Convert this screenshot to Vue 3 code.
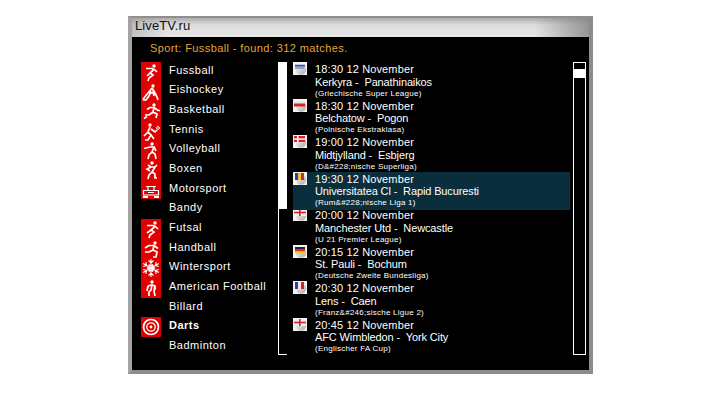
<script setup>
const figures = {
  soccer: { head: [13, 4], d: 'M5 6.5H11L13 7.5L9 11L12 13L8 16L7 19M13 7L16 10M9 11L6 14' },
  hockey: { head: [12, 5], d: 'M11 7L7 12L3 17L2 19M11 7L14 12L16 16L17 19M8 12H14M10 10L8 15L5 19H2M12 10L13 15' },
  run: { head: [13, 4], d: 'M6 8.5L9 6.5H13L12 11L16 13L15 17M13 6.5L17 9.5H19M12 11L8 14H4M3 17.5L6 15.5' },
  tennis: { head: [9, 4], d: 'M9 6L7 11L10 14L7 19H4M7 11L3 15M10 8L14 11L16 9M10 14L13 18', ball: [17, 7] },
  volley: { head: [11, 4], d: 'M3 8.5L9 7H13L11 12L14 14L15 19M11 12L8 15L7 19M13 7L15 11' },
  box: { head: [11, 3], d: 'M7 5L10 7H14L16 5M10 7L6 9L9 11M14 7L11 12L14 14L14 18H16M11 12L8 15L7 19' },
  motor: { car: true, d: '' },
  futsal: { head: [14, 4], d: 'M6 6.5H12L14 7.5L10 11L13 13L9 16L8 19M14 7L17 10M10 11L6 14' },
  hand: { head: [14, 4], d: 'M4 9L8 6.5H13L12 11L16 13L15 18H12M13 6.5L17 9.5M12 11L8 13H4' },
  winter: { snow: true, d: '' },
  american: { head: [11, 4], d: 'M7 8L11 7L14 8L13 13L14 18M11 7L10 12L8 14V18M7 8L6 13M14 8V12' },
  darts: { target: true, d: '' }
}

const sports = [
  [{ name: 'Fussball', icon: 'soccer' }, { name: 'Eishockey', icon: 'hockey' }, { name: 'Basketball', icon: 'run' }, { name: 'Tennis', icon: 'tennis' }, { name: 'Volleyball', icon: 'volley' }, { name: 'Boxen', icon: 'box' }, { name: 'Motorsport', icon: 'motor' }],
  [{ name: 'Bandy' }],
  [{ name: 'Futsal', icon: 'futsal' }, { name: 'Handball', icon: 'hand' }, { name: 'Wintersport', icon: 'winter' }, { name: 'American Football', icon: 'american' }],
  [{ name: 'Billard' }],
  [{ name: 'Darts', icon: 'darts', bold: true }],
  [{ name: 'Badminton' }]
].flatMap((g, gi) => g.map((s, i) => ({ ...s, key: gi + '-' + i })))

const snowAngles = [0, 60, 120]

const matches = [
  { time: '18:30 12 November', teams: 'Kerkyra -  Panathinaikos', league: '(Griechische Super League)', flag: 'gr' },
  { time: '18:30 12 November', teams: 'Belchatow -  Pogon', league: '(Polnische Ekstraklasa)', flag: 'pl' },
  { time: '19:00 12 November', teams: 'Midtjylland -  Esbjerg', league: '(D&#228;nische Superliga)', flag: 'dk' },
  { time: '19:30 12 November', teams: 'Universitatea Cl -  Rapid Bucuresti', league: '(Rum&#228;nische Liga 1)', flag: 'ro', selected: true },
  { time: '20:00 12 November', teams: 'Manchester Utd -  Newcastle', league: '(U 21 Premier League)', flag: 'en' },
  { time: '20:15 12 November', teams: 'St. Pauli -  Bochum', league: '(Deutsche Zweite Bundesliga)', flag: 'de' },
  { time: '20:30 12 November', teams: 'Lens -  Caen', league: '(Franz&#246;sische Ligue 2)', flag: 'fr' },
  { time: '20:45 12 November', teams: 'AFC Wimbledon -  York City', league: '(Englischer FA Cup)', flag: 'en' }
]
</script>

<template>
  <div class="window">
    <div class="titlebar">LiveTV.ru</div>
    <div class="panel">
      <div class="heading">Sport: Fussball - found: 312 matches.</div>
      <div class="columns">
        <ul class="sports">
          <li v-for="s in sports" :key="s.key" class="sport" :class="{ bold: s.bold }">
            <span class="icon" :class="{ red: s.icon }">
              <svg v-if="s.icon" viewBox="0 0 20 20" width="20" height="20" fill="none" stroke="#fff" stroke-width="1.7">
                <template v-if="figures[s.icon].head">
                  <circle :cx="figures[s.icon].head[0]" :cy="figures[s.icon].head[1]" r="1.7" fill="#fff" stroke="none" />
                  <path :d="figures[s.icon].d" />
                  <circle v-if="figures[s.icon].ball" :cx="figures[s.icon].ball[0]" :cy="figures[s.icon].ball[1]" r="1.4" stroke-width="1" />
                </template>
                <template v-else-if="figures[s.icon].car">
                  <path d="M5 6.5H15M7 6.5V10M13 6.5V10M2.5 10.5H17.5V15H2.5ZM7 12.5H13" stroke-width="1.2" />
                  <path d="M2 17H7M13 17H18" stroke-width="1.8" />
                </template>
                <template v-else-if="figures[s.icon].snow">
                  <g v-for="a in snowAngles" :key="a" :transform="`rotate(${a} 10 10)`">
                    <path d="M10 1V19M7.5 2.5L10 5L12.5 2.5M7.5 17.5L10 15L12.5 17.5M8 6.5L10 8.5L12 6.5M8 13.5L10 11.5L12 13.5" stroke-width="1.1" />
                  </g>
                </template>
                <template v-else>
                  <circle cx="10" cy="10" r="7.5" />
                  <circle cx="10" cy="10" r="4.2" stroke-width="1.3" />
                  <circle cx="10" cy="10" r="1.4" fill="#fff" stroke="none" />
                </template>
              </svg>
            </span>
            <span class="sport-name">{{ s.name }}</span>
          </li>
        </ul>
        <div class="scroll scroll-left"><div class="thumb-left"></div></div>
        <div class="matches">
          <div v-for="m in matches" :key="m.time + m.teams" class="match" :class="{ selected: m.selected }">
            <span class="flag">
              <svg viewBox="0 0 14 13" width="14" height="13">
                <defs>
                  <linearGradient id="tile" x1="0" y1="0" x2="1" y2="1">
                    <stop offset="0" stop-color="#fff" />
                    <stop offset="1" stop-color="#a8a8a8" />
                  </linearGradient>
                </defs>
                <rect width="14" height="13" fill="#f4f4f4" />
                <circle cx="8" cy="7.5" r="5.2" fill="url(#tile)" />
                <template v-if="m.flag === 'gr'">
                  <rect x="2" y="2" width="10" height="5" fill="#c4c8e6" />
                  <rect x="2" y="3" width="10" height="1.5" fill="#3f4da8" />
                  <rect x="2" y="5.5" width="9" height="1" fill="#6a74bc" />
                </template>
                <template v-else-if="m.flag === 'pl'">
                  <rect x="1" y="2" width="11" height="3" fill="#e6e6e6" />
                  <rect x="1" y="4.5" width="11" height="3" fill="#d8222a" />
                </template>
                <template v-else-if="m.flag === 'dk'">
                  <rect x="1" y="1" width="11" height="6" fill="#d8222a" />
                  <rect x="4" y="1" width="1.5" height="6" fill="#fff" />
                  <rect x="1" y="3.4" width="11" height="1.4" fill="#fff" />
                </template>
                <template v-else-if="m.flag === 'ro'">
                  <rect x="2" y="1" width="3" height="7" fill="#2b3f9e" />
                  <rect x="5" y="1" width="3" height="7" fill="#f2c81e" />
                  <rect x="8" y="1" width="3" height="7" fill="#d42a2a" />
                </template>
                <template v-else-if="m.flag === 'en'">
                  <rect x="1" y="1" width="12" height="7" fill="#eee" />
                  <rect x="6" y="1" width="1.6" height="7" fill="#d8222a" />
                  <rect x="1" y="3.7" width="12" height="1.6" fill="#d8222a" />
                </template>
                <template v-else-if="m.flag === 'de'">
                  <rect x="2" y="2" width="10" height="2.2" fill="#222" />
                  <rect x="2" y="4.2" width="10" height="2.2" fill="#d8222a" />
                  <rect x="2" y="6.4" width="10" height="2.2" fill="#f2c81e" />
                </template>
                <template v-else>
                  <rect x="2" y="1" width="3" height="7" fill="#2b3f9e" />
                  <rect x="5" y="1" width="3" height="7" fill="#eee" />
                  <rect x="8" y="1" width="3" height="7" fill="#d8222a" />
                </template>
              </svg>
            </span>
            <div class="match-text">
              <div class="time">{{ m.time }}</div>
              <div class="teams">{{ m.teams }}</div>
              <div class="league">{{ m.league }}</div>
            </div>
          </div>
        </div>
        <div class="scroll scroll-right"><div class="thumb-right"></div></div>
      </div>
    </div>
  </div>
</template>

<style>
html, body { background: #fff; }
</style>

<style scoped>
.window {
  box-sizing: border-box;
  width: 465px;
  height: 358px;
  margin: 16px 0 0 128px;
  display: flex;
  flex-direction: column;
  border-width: 2px 4px 4px;
  border-style: solid;
  border-color: #8f8f8f #8c8c8c #8c8c8c #a4a4a4;
  background: #e4e4e4;
  font-family: "Liberation Sans", Arial, sans-serif;
  color: #fff;
  overflow: hidden;
}
.titlebar {
  height: 19px;
  padding-left: 3px;
  font-size: 13px;
  line-height: 16px;
  letter-spacing: 0.1px;
  color: #111;
  background:
    linear-gradient(90deg, rgba(160,160,160,.5) 0%, rgba(230,230,230,0) 8%, rgba(230,230,230,0) 88%, rgba(130,130,130,.8) 100%),
    linear-gradient(180deg, #adadad 0%, #dcdcdc 35%, #e8e8e8 100%);
  flex: none;
}
.panel {
  flex: 1;
  background: #000;
  min-height: 0;
  display: flex;
  flex-direction: column;
}
.heading {
  height: 25px;
  padding: 3px 0 0 18px;
  box-sizing: border-box;
  font-size: 11px;
  line-height: 17px;
  letter-spacing: 0.4px;
  color: #e2a636;
  flex: none;
}
.columns {
  display: flex;
  padding-left: 9px;
  align-items: flex-start;
}
.sports {
  list-style: none;
  margin: 0;
  padding: 0;
  width: 137px;
  flex: none;
}
.sport {
  height: 19.65px;
  display: flex;
  align-items: center;
  font-size: 11px;
  letter-spacing: 0.5px;
}
.sport.bold { font-weight: 700; }
.icon {
  flex: none;
  width: 20px;
  height: 100%;
  margin-right: 8px;
  display: flex;
  align-items: center;
}
.icon.red { background: #e00000; }
.sport-name { position: relative; top: -2px; }
.scroll {
  box-sizing: border-box;
  height: 293px;
  flex: none;
}
.scroll-left {
  width: 9px;
  border-left: 1px solid #fff;
  border-bottom: 1px solid #fff;
}
.thumb-left {
  height: 147px;
  margin-left: -1px;
  background: #fff;
}
.matches {
  width: 277px;
  margin-left: 6px;
  flex: none;
}
.match {
  height: 36.5px;
  display: flex;
  box-sizing: border-box;
}
.match.selected {
  background: #0b2e3d;
  height: 38px;
  margin-bottom: -1.5px;
  position: relative;
}
.flag {
  flex: none;
  width: 14px;
  height: 13px;
  margin-right: 8px;
}
.flag svg { display: block; }
.match-text { padding-top: 1px; white-space: pre; }
.time {
  font-size: 11px;
  line-height: 12.5px;
  letter-spacing: 0.14px;
}
.teams {
  font-size: 11px;
  line-height: 12px;
  letter-spacing: -0.12px;
}
.league {
  font-size: 8px;
  line-height: 11px;
  letter-spacing: 0.25px;
}
.scroll-right {
  width: 13px;
  margin-left: 3px;
  border: 1px solid #fff;
}
.thumb-right {
  height: 9px;
  margin-top: 6px;
  background: #fff;
}
</style>
